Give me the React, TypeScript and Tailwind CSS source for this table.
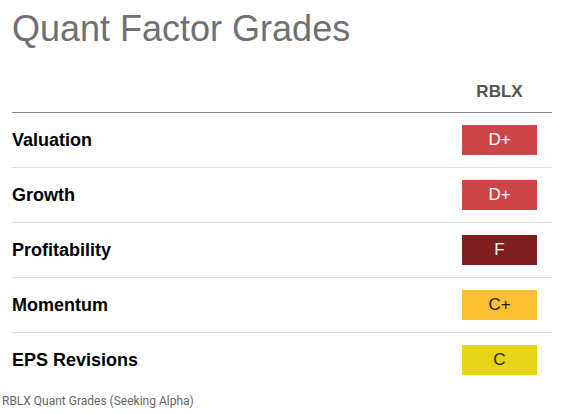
import React from "react";

const grades = [
  { label: "Valuation", grade: "D+", cls: "bg-[#cc4649] text-white" },
  { label: "Growth", grade: "D+", cls: "bg-[#cc4649] text-white" },
  { label: "Profitability", grade: "F", cls: "bg-[#7f1e1e] text-white" },
  { label: "Momentum", grade: "C+", cls: "bg-[#fbbf2f] text-[#222]" },
  { label: "EPS Revisions", grade: "C", cls: "bg-[#e6d516] text-[#222]" },
];

export default function App() {
  return (
    <div className="w-[566px] h-[414px] bg-white font-['Liberation_Sans',Arial,sans-serif] overflow-hidden">
      <h1 className="pl-[12px] pt-[9px] text-[36px] leading-[40px] text-[#707070]">
        Quant Factor Grades
      </h1>
      <div className="ml-[12px] w-[540px] mt-[34px]">
        <div className="flex justify-end border-b border-[#7d8787] pb-[11px]">
          <div className="w-[75px] mr-[15px] text-center text-[17px] leading-[18px] font-bold text-[#555]">
            RBLX
          </div>
        </div>
        {grades.map((g, i) => (
          <div
            key={g.label}
            className={
              "flex items-center justify-between py-[12px] " +
              (i < grades.length - 1 ? "border-b border-[#dddddd]" : "")
            }
          >
            <span className="text-[18px] font-bold text-black">{g.label}</span>
            <span
              className={
                "w-[75px] h-[30px] mr-[15px] flex items-center justify-center text-[17px] " +
                g.cls
              }
            >
              {g.grade}
            </span>
          </div>
        ))}
      </div>
      <p className="pl-[2px] mt-[7px] text-[12px] leading-[14px] text-[#666] font-['Roboto',sans-serif]">
        RBLX Quant Grades (Seeking Alpha)
      </p>
    </div>
  );
}
